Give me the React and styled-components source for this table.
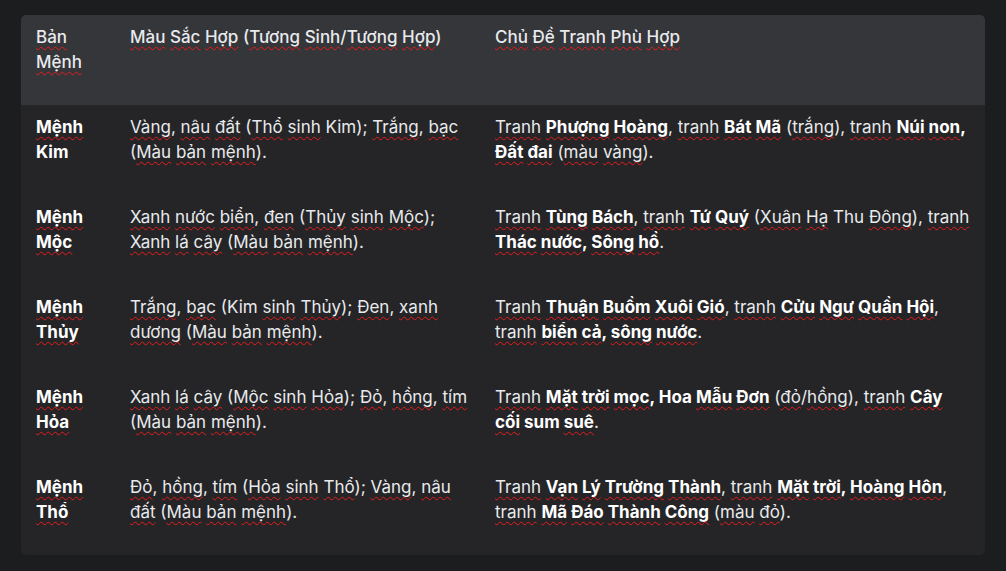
import React from "react";
import styled, { createGlobalStyle } from "styled-components";

const GlobalStyle = createGlobalStyle`
  html, body {
    margin: 0;
    background: #1c1d1f;
  }
  body {
    padding: 15px 21px;
    font-family: Inter, "Noto Sans", "Liberation Sans", sans-serif;
  }
`;

const known = ["Kim", "Thu", "Hoa", "sum"];

// wrap each word in a squiggle, like the browser's spell checker does
const spell = text =>
  text.split(/(\p{L}+)/u).map((part, i) =>
    /\p{L}/u.test(part) && !known.includes(part) ? (
      <Miss key={i}>{part}</Miss>
    ) : (
      part
    )
  );

const rows = [
  {
    name: "Mệnh Kim",
    colors: "Vàng, nâu đất (Thổ sinh Kim); Trắng, bạc (Màu bản mệnh).",
    theme: [
      ["Tranh "],
      ["Phượng Hoàng", true],
      [", tranh "],
      ["Bát Mã", true],
      [" (trắng), tranh "],
      ["Núi non, Đất đai", true],
      [" (màu vàng)."]
    ]
  },
  {
    name: "Mệnh Mộc",
    colors: "Xanh nước biển, đen (Thủy sinh Mộc); Xanh lá cây (Màu bản mệnh).",
    theme: [
      ["Tranh "],
      ["Tùng Bách", true],
      [", tranh "],
      ["Tứ Quý", true],
      [" (Xuân Hạ Thu Đông), tranh "],
      ["Thác nước, Sông hồ", true],
      ["."]
    ]
  },
  {
    name: "Mệnh Thủy",
    colors: "Trắng, bạc (Kim sinh Thủy); Đen, xanh dương (Màu bản mệnh).",
    theme: [
      ["Tranh "],
      ["Thuận Buồm Xuôi Gió", true],
      [", tranh "],
      ["Cửu Ngư Quần Hội", true],
      [", tranh "],
      ["biển cả, sông nước", true],
      ["."]
    ]
  },
  {
    name: "Mệnh Hỏa",
    colors: "Xanh lá cây (Mộc sinh Hỏa); Đỏ, hồng, tím (Màu bản mệnh).",
    theme: [
      ["Tranh "],
      ["Mặt trời mọc, Hoa Mẫu Đơn", true],
      [" (đỏ/hồng), tranh "],
      ["Cây cối sum suê", true],
      ["."]
    ]
  },
  {
    name: "Mệnh Thổ",
    colors: "Đỏ, hồng, tím (Hỏa sinh Thổ); Vàng, nâu đất (Màu bản mệnh).",
    theme: [
      ["Tranh "],
      ["Vạn Lý Trường Thành", true],
      [", tranh "],
      ["Mặt trời, Hoàng Hôn", true],
      [", tranh "],
      ["Mã Đáo Thành Công", true],
      [" (màu đỏ)."]
    ]
  }
];

const App = () => (
  <>
    <GlobalStyle />
    <Card>
      <Table>
        <colgroup>
          <col width="94" />
          <col width="365" />
          <col />
        </colgroup>
        <thead>
          <tr>
            <Head>{spell("Bản Mệnh")}</Head>
            <Head>{spell("Màu Sắc Hợp (Tương Sinh/Tương Hợp)")}</Head>
            <Head>{spell("Chủ Đề Tranh Phù Hợp")}</Head>
          </tr>
        </thead>
        <tbody>
          {rows.map(row => (
            <tr key={row.name}>
              <Cell bold>{spell(row.name)}</Cell>
              <Cell>{spell(row.colors)}</Cell>
              <Cell>
                {row.theme.map(([t, b], i) =>
                  b ? <Strong key={i}>{spell(t)}</Strong> : <span key={i}>{spell(t)}</span>
                )}
              </Cell>
            </tr>
          ))}
        </tbody>
      </Table>
    </Card>
  </>
);

export default App;

const Card = styled.div`
  width: 964px;
  border-radius: 5px;
  overflow: hidden;
  background: #252527;
`;

const Table = styled.table`
  width: 100%;
  border-collapse: collapse;
  table-layout: fixed;
  color: #e8eaed;
  font-size: 17px;
  line-height: 25px;
`;

const Head = styled.th`
  height: 90px;
  box-sizing: border-box;
  padding: 10px 15px;
  vertical-align: top;
  text-align: left;
  font-weight: 500;
  background: #35363a;
`;

const Cell = styled.td`
  height: 90px;
  box-sizing: border-box;
  padding: 10px 15px;
  vertical-align: top;
  font-weight: ${props => (props.bold ? 700 : 400)};
  color: ${props => (props.bold ? "#ffffff" : "#e8eaed")};

  &:nth-child(2) {
    padding-right: 11px;
  }
`;

const Strong = styled.strong`
  font-weight: 700;
  color: #ffffff;
`;

const Miss = styled.span`
  text-decoration: underline wavy #e51c1c;
  text-decoration-thickness: 1px;
  text-underline-offset: 3px;
  text-decoration-skip-ink: none;
`;
